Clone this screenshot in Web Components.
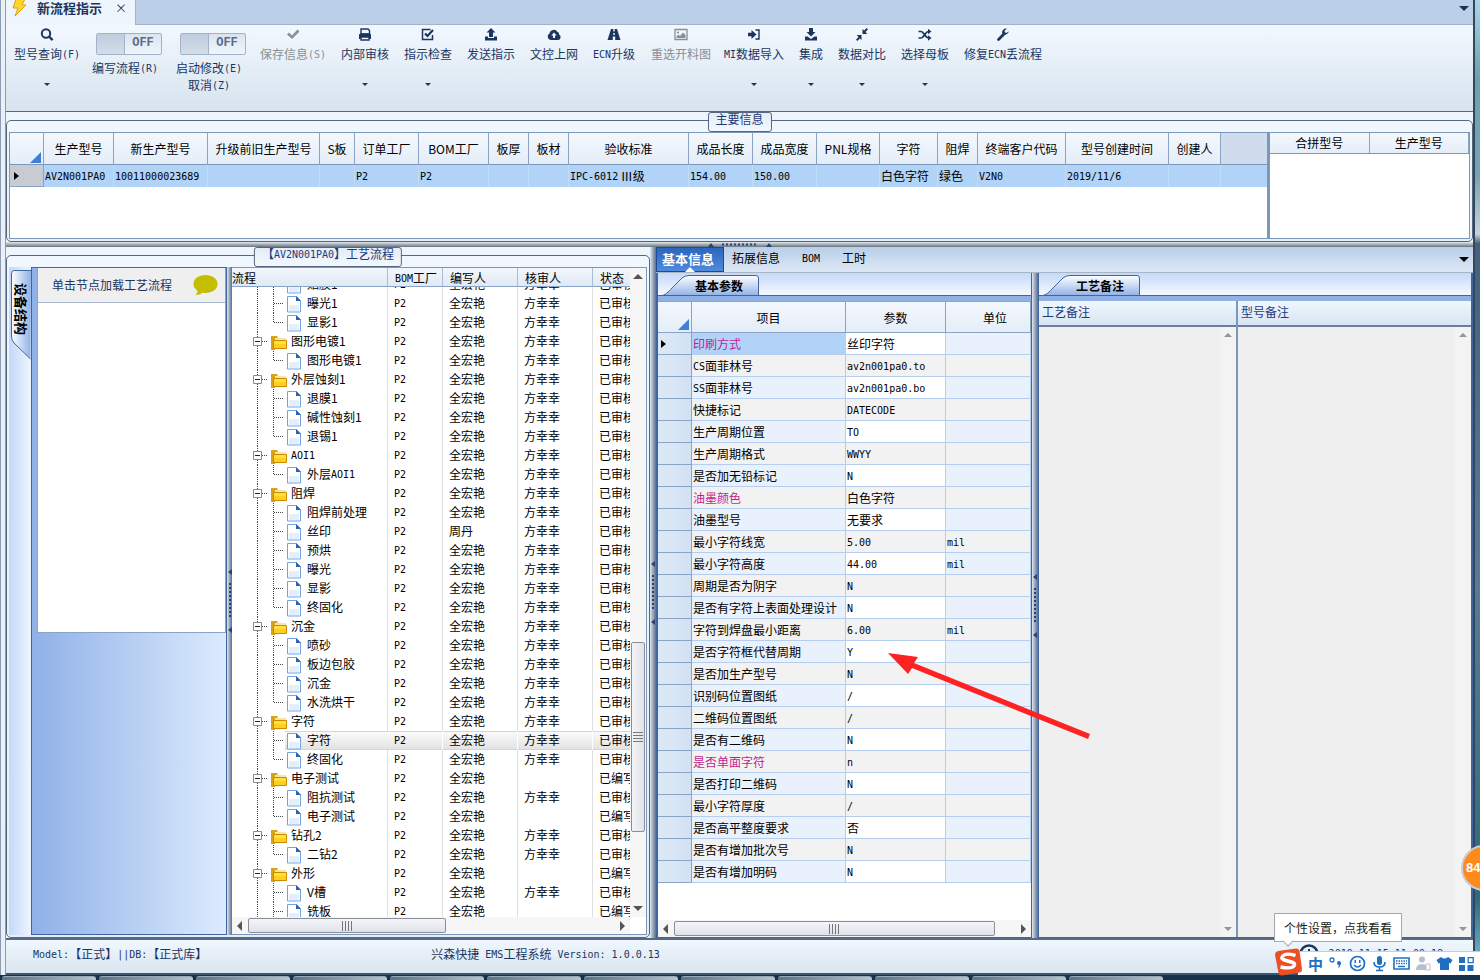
<!DOCTYPE html>
<html lang="zh-CN">
<head>
<meta charset="utf-8">
<title>新流程指示</title>
<style>
  body { margin: 0; font: 12px/18px "Noto Sans CJK SC", sans-serif; color: #000; --navy: #1c3560; --line: #56687f; overflow: hidden; }
</style>
</head>
<body>
<ems-app></ems-app>
<script>
/* Latin runs are set in a half-width face beside the full-width characters. */
const mono = s => s.replace(/ ?[\x21-\x7e]{2,}( +[\x21-\x7e]+)*|^[\x21-\x7e]$/g, m => `<span class="l">${m}</span>`);
const BASE = `*{box-sizing:border-box} .l{font-family:"DejaVu Sans Mono",monospace;font-size:10px;line-height:10px;vertical-align:1px;white-space:pre}
button,input,textarea{font:inherit;color:inherit;margin:0;padding:0;border:0;background:none;border-radius:0}`;
class Base extends HTMLElement {
  connectedCallback() {
    if (this.shadowRoot) return;
    this.attachShadow({ mode: 'open' }).innerHTML = `<style>${BASE}${this.css()}</style>${this.html()}`;
    this.ready && this.ready();
  }
}

/* ---------- ribbon ---------- */
const ICONS = {
  search: '<circle cx="7" cy="6.5" r="4.2" fill="none" stroke="currentColor" stroke-width="2"/><path d="M10 9.5l3.6 3.6" stroke="currentColor" stroke-width="2.4"/>',
  check: '<path d="M2 7.4l2-2 3 3 5.400-5.900 2.100 2L7.100 12z" fill="currentColor"/>',
  print: '<path d="M4 2h7l1.500 1.500V7H4z" fill="#f3f8fe" stroke="currentColor" stroke-width="1.400"/><path d="M2 8q0-1.500 1.500-1.500h9Q14 6.500 14 8v4h-2v-2H4v2H2z" fill="currentColor"/><path d="M4 10h8v3H4z" fill="#f3f8fe" stroke="currentColor" stroke-width="1.300"/>',
  tick: '<path d="M12.500 8v4.500h-10v-10h8" fill="none" stroke="currentColor" stroke-width="1.500"/><path d="M5 6.500l2.500 2.500 5.500-6" fill="none" stroke="currentColor" stroke-width="2.200"/>',
  up: '<path d="M8 1l4.500 4.500H10V10H6V5.500H3.500z" fill="currentColor"/><path d="M2 9.500h3V11h6V9.500h3V13.500H2z" fill="currentColor"/>',
  down: '<path d="M8 9.500L3.500 5H6V1h4v4h2.500z" fill="currentColor"/><path d="M2 9.500h2.500L8 12l3.500-2.500H14v4H2z" fill="currentColor"/>',
  cloud: '<path d="M4.500 13a3.500 3.500 0 0 1-1-6.500A4.300 4.300 0 0 1 11.500 5a2 2 0 0 1 1.500 2.500A2.900 2.900 0 0 1 12 13z" fill="currentColor"/><path d="M8 5.500L5.300 8.500H7V11h2V8.500h1.700z" fill="#f3f8fe"/>',
  road: '<path d="M5 2h2.300v2.500h1.400V2H11l3.500 11H9.200V9.500H6.800V13H1.500z" fill="currentColor"/><path d="M7.300 6h1.400v2H7.300z" fill="#f3f8fe"/>',
  image: '<path d="M2 2.500h12v10H2z" fill="none" stroke="currentColor" stroke-width="1.300"/><circle cx="5" cy="5.500" r="1.100" fill="currentColor"/><path d="M3.500 11V9.500l2-2 1.500 1.500L10 5.500l2.500 2.500v3z" fill="currentColor"/>',
  enter: '<path d="M2 5.700h3.500V3l5 4.500-5 4.500V9.300H2z" fill="currentColor"/><path d="M9.500 3H13v9H9.500" fill="none" stroke="currentColor" stroke-width="1.400"/>',
  shrink: '<path d="M8.500 7.500v-5l1.600 1.600L12.700 1.500 14 2.800l-2.500 2.600 1.700 2.100zM7.500 8.500v5l-1.600-1.600L3.300 14.500 2 13.200l2.500-2.600-1.700-2.100z" fill="currentColor" transform="translate(0 -.5)"/>',
  shuffle: '<path d="M1.500 4.500h2.500c3 0 4 6.500 7.500 6.500M1.500 11h2.500c3 0 4-6.500 7.500-6.500" fill="none" stroke="currentColor" stroke-width="1.700"/><path d="M11 1.800l3.500 2.700L11 7.200zM11 8.300l3.500 2.700L11 13.700z" fill="currentColor"/>',
  wrench: '<path d="M3.500 12.500l5-5" stroke="currentColor" stroke-width="2.800" stroke-linecap="round"/><path d="M13.800 4.300L11.500 6 9.800 5.200 9.600 3.500 12 1.800A3.800 3.800 0 0 0 7.200 6.500 3.800 3.800 0 0 0 13.800 4.300z" fill="currentColor"/>'
};
customElements.define('tool-button', class extends Base {
  css() { return `:host{display:block;flex:none}
    button{display:flex;flex-direction:column;align-items:center;width:100%;height:100%;color:var(--navy);white-space:nowrap}
    button:disabled{color:#8b8f96} svg{display:block;margin-top:2px;height:16px;width:16px} .t{height:18px;margin-top:2px}
    .c{width:0;height:0;border:3px solid transparent;border-top-color:var(--navy);border-bottom:0;margin-top:20px}`; }
  html() { const a = n => this.hasAttribute(n);
    return `<button type="button" ${a('off') ? 'disabled' : ''}><svg viewBox="0 0 16 16">${ICONS[this.getAttribute('icon')]}</svg><span class="t">${mono(this.getAttribute('label'))}</span>${a('menu') ? '<span class="c"></span>' : ''}</button>`; }
});
customElements.define('tool-switch', class extends Base {
  css() { return `:host{display:block;flex:none} label{display:flex;flex-direction:column;align-items:center;color:var(--navy);white-space:nowrap;line-height:17px}
    .s{position:relative;display:flex;width:66px;height:22px;margin:8px 0 4px 8px;border:1px solid #a3b2cb;border-radius:2px;background:linear-gradient(#dbe4ee,#eef5fc)}
    input{appearance:none;width:28px;height:20px;background:linear-gradient(#bfccdd,#d3deea);border-right:1px solid #a3b2cb}
    b{flex:1;text-align:center;font:bold 12px/19px "Liberation Mono",monospace;color:#5b6c86}`; }
  html() { return `<label><span class="s"><input type="checkbox"><b>OFF</b></span>${this.getAttribute('label').split('|').map(s => `<span>${mono(s)}</span>`).join('')}</label>`; }
});

/* ---------- containers ---------- */
customElements.define('group-panel', class extends Base {
  css() { return `:host{display:flex;flex-direction:column;background:#eef5fd;padding-top:8px;min-width:0}
    .b{position:relative;flex:1;display:flex;min-height:0;border:1px solid var(--line);border-radius:5px;padding:11px 2px 2px;background:linear-gradient(#f0f7fe,#e6eff9)}
    h2{position:absolute;top:-9px;left:50%;transform:translateX(-50%);margin:0;font:inherit;line-height:12px;height:20px;padding:0 7px;border:1px solid var(--line);border-radius:3px;color:#1f3a78;background:linear-gradient(#e3ecf8,#f3f8fe);white-space:nowrap;z-index:1}`; }
  html() { return `<div class="b"><h2>${mono(this.getAttribute('caption'))}</h2><slot></slot></div>`; }
});
customElements.define('folder-tab', class extends Base {
  css() { return `:host{display:flex;height:28px;flex:none;border-bottom:5px solid #8fb1e6;background:linear-gradient(#c5d9f8,#f6faff);position:relative}
    button{position:relative;width:100px;height:21px;margin:2px 0 0 2px;padding-left:18px;font-weight:bold;line-height:20px}
    svg{position:absolute;left:0;top:0;width:100px;height:21px} span{position:relative}
    :host::after{content:"";position:absolute;left:0;right:0;bottom:0;height:1px;background:#3f66a3}`; }
  html() { return `<button type="button"><svg viewBox="0 0 100 21"><defs><linearGradient id="g" x2="0" y2="1"><stop stop-color="#fff"/><stop offset="1" stop-color="#8fb1e6"/></linearGradient></defs><path d="M0 21C6 20 8 17 12 13L22 3Q25 .5 29 .5H96Q98.500 .5 98.500 3V21" fill="url(#g)" stroke="#3f66a3"/></svg><span>${this.getAttribute('label')}</span></button>`; }
});
customElements.define('split-bar', class extends Base {
  css() { return `:host{display:flex;align-items:center;justify-content:center;flex:none;overflow:hidden;background:linear-gradient(90deg,#dfe6ee,#8e9cb0 60%,#5d7088)}
    :host([wide]){height:5px;background:linear-gradient(#e4e9ee,#96a2ad 60%,#66727e)} :host(:not([wide])){width:6px} :host([thin]){width:5px!important} svg{display:block;flex:none}`; }
  html() { return this.hasAttribute('wide')
    ? `<svg width="64" height="5"><path d="M0 5l3-4 3 4zM58 5l3-4 3 4z" fill="#27436f"/><path d="M14 2.500h36" stroke="#27436f" stroke-width="2" stroke-dasharray="2 2"/></svg>`
    : `<svg width="6" height="64"><path d="M5 0L1 3l4 3zM5 58l-4 3 4 3z" fill="#27436f"/><path d="M3 14v36" stroke="#27436f" stroke-width="2" stroke-dasharray="2 2"/></svg>`; }
});
/* start / size: percent of the track taken before and by the thumb */
customElements.define('scroll-bar', class extends Base {
  css() { const v = this.hasAttribute('vertical'), st = this.getAttribute('start'), sz = this.getAttribute('size');
    return `:host{display:flex;flex:none;flex-direction:${v ? 'column' : 'row'};align-items:center;background:#f6f6f7;${v ? 'width:16px' : 'height:17px'}}
    i{flex:none;width:0;height:0;border:5px solid transparent;margin:${v ? '6px 0' : '0 5px'}} :host([dim]) i{border-width:4px}
    i:first-of-type{border-${v ? 'bottom' : 'right'}-color:#555;border-${v ? 'top' : 'left'}-width:0!important}
    i:last-of-type{border-${v ? 'top' : 'left'}-color:#555;border-${v ? 'bottom' : 'right'}-width:0!important}
    :host([dim]) i{opacity:.6}
    .k{flex:1;align-self:stretch;display:flex;flex-direction:${v ? 'column' : 'row'};padding:1px}
    .p{flex:0 0 ${st}%} .h{flex:0 0 ${sz}%;display:flex;align-items:center;justify-content:center;border:1px solid #8b8e99;border-radius:2px;background:linear-gradient(${v ? '90deg' : '180deg'},#f4f5f8,#dfe2ea)}
    .h::after{content:"";width:10px;height:10px;background:repeating-linear-gradient(${v ? '180deg' : '90deg'},#777 0 1px,transparent 1px 3px)}`; }
  html() { return `<i></i><div class="k">${this.hasAttribute('size') ? '<div class="p"></div><div class="h"></div>' : ''}</div><i></i>`; }
});

/* ---------- top grids ---------- */
customElements.define('main-grid', class extends Base {
  css() { return `:host{display:block;flex:1;min-width:0;border:1px solid #7d97b8;background:#fff;overflow:hidden}
    table{border-collapse:separate;border-spacing:0;table-layout:fixed;width:100%} th,td{padding:0;white-space:nowrap;overflow:hidden}
    th{height:32px;font-weight:normal;background:linear-gradient(#f4f8fd,#e4edf8);border-right:1px solid #8ba3c4;border-bottom:1px solid #7d97b8}
    th:last-child{background:#cfdcee;border-right:0} td{height:22px;background:#b0d3f7;border-right:1px solid #bfdcf8;padding-left:1px} td:last-child{border-right:0}
    .m{position:relative;background:#c8ccd2;border:0 solid #8ba3c4;border-width:0 1px 1px 0} th:first-child svg{display:block;margin:18px 0 0 20px}
    .m svg{display:block;margin-left:3px}`; }
  html() {
    const cols = [['', 34], ['生产型号', 70, 'AV2N001PA0'], ['新生产型号', 94, '10011000023689'], ['升级前旧生产型号', 112], ['S板', 35], ['订单工厂', 64, 'P2'], ['BOM工厂', 70, 'P2'], ['板厚', 40], ['板材', 40], ['验收标准', 120, 'IPC-6012 Ⅲ级'], ['成品长度', 64, '154.00'], ['成品宽度', 64, '150.00'], ['PNL规格', 63], ['字符', 58, '白色字符'], ['阻焊', 40, '绿色'], ['终端客户代码', 88, 'V2N0'], ['型号创建时间', 103, '2019/11/6'], ['创建人', 52], ['', 0]];
    return `<table><colgroup>${cols.map(c => `<col${c[1] ? ` style="width:${c[1]}px"` : ''}>`).join('')}</colgroup><thead><tr>${cols.map((c, i) => `<th>${i ? c[0] : '<svg width="11" height="11"><path d="M11 0v11H0z" fill="#3f7fd8"/></svg>'}</th>`).join('')}</tr></thead>
    <tbody><tr>${cols.map((c, i) => i ? `<td>${mono(c[2] || '')}</td>` : '<td class="m"><svg width="5" height="8"><path d="M0 0l5 4-5 4z"/></svg></td>').join('')}</tr></tbody></table>`; }
});
customElements.define('merge-grid', class extends Base {
  css() { return `:host{display:block;flex:none;width:202px;border:1px solid #7d97b8;border-left-width:2px;background:#fff}
    table{border-collapse:separate;border-spacing:0;table-layout:fixed;width:100%} th{padding:0;height:21px;font-weight:normal;line-height:20px;background:linear-gradient(#f4f8fd,#e4edf8);border-bottom:1px solid #7d97b8;border-right:1px solid #8ba3c4}`; }
  html() { return `<table><thead><tr><th>合拼型号</th><th>生产型号</th></tr></thead></table>`; }
});

/* ---------- left: structure + process tree ---------- */
customElements.define('structure-panel', class extends Base {
  css() { return `:host{display:flex;flex:none;width:218px;background:linear-gradient(90deg,#c4d8fa,#eef5ff 22px)}
    .v{position:relative;width:22px;flex:none} .v button{position:relative;writing-mode:vertical-rl;text-orientation:sideways;width:20px;height:90px;margin:3px 0 0 2px;padding:13px 0 0;text-align:left;font-weight:bold;font-size:13px;line-height:18px}
    .v svg{position:absolute;left:0;top:0} .v span{position:relative}
    .p{flex:1;border:1px solid #3f66a3;background:linear-gradient(90deg,#8fb1e8,#dceafd)}
    .w{margin-left:5px;height:365px;background:#fff;border:1px solid #8ba3c4;border-width:0 1px 1px}
    header{display:flex;justify-content:space-between;align-items:center;height:35px;padding:0 7px 0 14px;background:#efefef;border-bottom:1px solid #a8b8cf;color:var(--navy)} header svg{display:block}`; }
  html() { return `<div class="v"><button type="button"><svg width="20" height="90"><defs><linearGradient id="g" x2="1" y2="0"><stop stop-color="#fff"/><stop offset="1" stop-color="#8fb1e6"/></linearGradient></defs><path d="M20 .5H3Q.5 .5 .5 4V66Q.5 70 3 73L19.500 89" fill="url(#g)" stroke="#3f66a3"/></svg><span>设备结构</span></button></div>
    <div class="p"><div class="w"><header><span>单击节点加载工艺流程</span><svg width="25" height="22"><path d="M12.500 1C19 1 24.500 4.500 24.500 10S19 19 12.500 19q-1.500 0-3-.3Q7 21 2.500 21q2-2 2-4.300Q.5 14 .5 10C.5 4.500 6 1 12.500 1z" fill="#c3bf00"/></svg></header></div></div>`; }
});
customElements.define('process-tree', class extends Base {
  css() { return `:host{display:flex;flex:1;min-width:0;background:#fff;border:1px solid #7d97b8;border-width:1px 1px 1px 0}
    .a{flex:1;display:flex;flex-direction:column;min-width:0} .s{flex:1;min-height:0;overflow:hidden;position:relative}
    table{border-collapse:separate;border-spacing:0;table-layout:fixed;width:100%} th,td{padding:0 0 0 6px;height:19px;line-height:17px;white-space:nowrap;overflow:hidden;border-right:1px solid #dfdfdf} td{vertical-align:top}
    th{position:sticky;top:0;z-index:2;font-weight:normal;text-align:left;background:linear-gradient(#f3f7fc,#dfe9f6);border-right:1px solid #a9bdd9;border-bottom:1px solid #8ba3c4;padding-left:7px}
    td:first-child,th:first-child{padding:0} th:last-child,td:last-child{border-right:0}
    .n{display:flex;height:19px} .n svg{display:block;flex:none}
    tr.x td{background:linear-gradient(#d5d5d5 1px,#fafafa 1px,#e3e3e3 18px,#d5d5d5 18px) no-repeat;border-right-color:transparent} tr.x td:first-child{background-position:53px 0}
    .z{flex:none;display:flex;flex-direction:column}
    .z scroll-bar{flex:1} .z::after{content:"";height:17px;background:#fff}`; }
  html() {
    /* level (0 group, 1 step, 2 last step), name, editor, flag (n: not reviewed, s: selected) */
    const e = '全宏艳', rows = [[1, '贴膜1'], [1, '曝光1'], [2, '显影1'], [0, '图形电镀1'], [2, '图形电镀1'], [0, '外层蚀刻1'], [1, '退膜1'], [1, '碱性蚀刻1'], [2, '退锡1'], [0, 'AOI1'], [2, '外层AOI1'], [0, '阻焊'], [1, '阻焊前处理'], [1, '丝印', '周丹'], [1, '预烘'], [1, '曝光'], [1, '显影'], [2, '终固化'], [0, '沉金'], [1, '喷砂'], [1, '板边包胶'], [1, '沉金'], [2, '水洗烘干'], [0, '字符'], [1, '字符', e, 's'], [2, '终固化'], [0, '电子测试', e, 'n'], [1, '阻抗测试'], [2, '电子测试', e, 'n'], [0, '钻孔2'], [2, '二钻2'], [0, '外形', e, 'n'], [1, 'V槽'], [1, '铣板', e, 'n']];
    const dot = d => `<path d="${d}" stroke="#444" stroke-dasharray="1 1" fill="none"/>`;
    const folder = '<path d="M39 4h6l1 2h8v3h-9l-2 9h-4z" fill="#d9a21b"/><path d="M43 6h11v2H43z" fill="#f6e6a5"/><path d="M41.500 8.500h13v8h-13z" fill="#ffcf1f" stroke="#c98a00"/><path d="M42 9h12v3H42z" fill="#ffe03c"/>';
    const page = '<path d="M55.500 2.500h9l4 4v11.500h-13z" fill="#fff" stroke="#6fa3e8"/><path d="M57 11h10v6H57z" fill="#e3effd"/><path d="M64 2v5h5z" fill="#2f62b5"/>';
    const icon = l => l === 0
      ? `<svg width="59" height="19">${dot('M25.500 0v19M30 9.500h6')}<path d="M21.500 5.500h8v8h-8z" fill="#fff" stroke="#8a8a8a"/><path d="M23 9.500h5" stroke="#222"/>${folder}</svg>`
      : `<svg width="75" height="19">${dot('M25.500 0v19')}${dot(l === 2 ? 'M41.500 0v10' : 'M41.500 0v19')}${dot('M42 9.500h10')}${page}</svg>`;
    return `<div class="a"><div class="s"><table><colgroup><col><col style="width:55px"><col style="width:75px"><col style="width:75px"><col style="width:37px"></colgroup>
    <thead><tr><th>流程</th><th>${mono('BOM工厂')}</th><th>编写人</th><th>核审人</th><th>状态</th></tr></thead><tbody>${rows.map(([l, n, w = e, f = '']) => `<tr${f === 's' ? ' class="x"' : ''}><td><div class="n">${icon(l)}<span>${mono(n)}</span></div></td><td><span class="l">P2</span></td><td>${w}</td><td>${f === 'n' ? '' : '方幸幸'}</td><td>${f === 'n' ? '已编写' : '已审核'}</td></tr>`).join('')}</tbody></table></div>
    <scroll-bar start="0" size="54"></scroll-bar></div><div class="z"><scroll-bar vertical start="58" size="31"></scroll-bar></div>`; }
  ready() { this.shadowRoot.querySelector('.s').scrollTop = 12; }
});

/* ---------- right: parameters + notes ---------- */
customElements.define('param-panel', class extends Base {
  css() { return `:host{display:flex;flex-direction:column;flex:none;width:376px;background:#fff;border:1px solid #3f66a3;border-width:0 1px 1px 2px;overflow:hidden}
    .s{flex:1;min-height:0;overflow:hidden;border-top:1px solid #8ba3c4} table{border-collapse:separate;border-spacing:0;table-layout:fixed;width:100%}
    th{height:31px;padding:0;line-height:17px;font-weight:normal;background:linear-gradient(#f4f8fd,#e4edf8);border-right:1px solid #8ba3c4;border-bottom:1px solid #8ba3c4}
    td{height:22px;padding:0 0 0 1px;line-height:20px;white-space:nowrap;background:#e8f1fc;border-right:1px solid #b5cdee;border-bottom:1px solid #b5cdee}
    td:nth-child(3){background:#fff} tr:nth-child(even) td:nth-child(n+2){background:#f2f2f2}
    tbody td:first-child{background:linear-gradient(90deg,#dce9f6,#d3e2f3);border-color:#8ba3c4} tr:first-child td:nth-child(2){background:#b0d3f7} .k{color:#c21e93}
    th:last-child{padding-left:14px} th svg{display:block;margin:14px 0 0 20px} td svg{display:block;margin-left:2px}`; }
  html() {
    const rows = [['印刷方式', '丝印字符', 1], ['CS面菲林号', 'av2n001pa0.to'], ['SS面菲林号', 'av2n001pa0.bo'], ['快捷标记', 'DATECODE'], ['生产周期位置', 'TO'], ['生产周期格式', 'WWYY'], ['是否加无铅标记', 'N'], ['油墨颜色', '白色字符', 1], ['油墨型号', '无要求'], ['最小字符线宽', '5.00', 0, 'mil'], ['最小字符高度', '44.00', 0, 'mil'], ['周期是否为阴字', 'N'], ['是否有字符上表面处理设计', 'N'], ['字符到焊盘最小距离', '6.00', 0, 'mil'], ['是否字符框代替周期', 'Y'], ['是否加生产型号', 'N'], ['识别码位置图纸', '/'], ['二维码位置图纸', '/'], ['是否有二维码', 'N'], ['是否单面字符', 'n', 1], ['是否打印二维码', 'N'], ['最小字符厚度', '/'], ['是否高平整度要求', '否'], ['是否有增加批次号', 'N'], ['是否有增加明码', 'N']];
    return `<folder-tab label="基本参数"></folder-tab><div class="s"><table><colgroup><col style="width:34px"><col style="width:154px"><col style="width:100px"><col></colgroup>
    <thead><tr><th><svg width="11" height="11"><path d="M11 0v11H0z" fill="#3f7fd8"/></svg></th><th>项目</th><th>参数</th><th>单位</th></tr></thead>
    <tbody>${rows.map((r, i) => `<tr><td>${i ? '' : '<svg width="5" height="8"><path d="M0 0l5 4-5 4z"/></svg>'}</td><td${r[2] ? ' class="k"' : ''}>${mono(r[0])}</td><td>${mono(r[1])}</td><td>${mono(r[3] || '')}</td></tr>`).join('')}</tbody></table></div><scroll-bar start="0" size="94"></scroll-bar>`; }
});
customElements.define('note-panel', class extends Base {
  css() { return `:host{display:flex;flex-direction:column;flex:1;min-width:0;border:1px solid #3f66a3;border-width:0 2px 1px 1px;background:#efefef}
    .c{flex:1;display:flex;min-height:0} .n{display:flex;flex-direction:column;flex:1;min-width:0} .n:first-child{flex:none;width:199px;border-right:2px solid #7d97b8}
    label{height:26px;line-height:22px;padding-left:3px;color:#1f3a78;background:linear-gradient(#f0f7fe,#d8e5f3);border-bottom:2px solid #6b7f9c} .b{flex:1;display:flex;min-height:0} textarea{flex:1;min-width:0;resize:none;outline:0}
    .b scroll-bar{background:#f3f3f3}`; }
  html() { const n = (id, t) => `<div class="n"><label for="${id}">${t}</label><div class="b"><textarea id="${id}"></textarea><scroll-bar vertical dim></scroll-bar></div></div>`;
    return `<folder-tab label="工艺备注"></folder-tab><div class="c">${n('a', '工艺备注')}${n('b', '型号备注')}</div>`; }
});
customElements.define('info-tabs', class extends Base {
  css() { return `:host{display:flex;align-items:stretch;flex:none;height:26px;background:linear-gradient(#b9cee9,#dde8f5);border-bottom:1px solid #a9b6c8}
    button{position:relative;padding:0 8px 3px;line-height:20px;height:25px} .on{width:68px;padding:0 4px 2px 0;color:#fff;font-weight:bold;font-size:13px;background:linear-gradient(#2a66bd,#4f8ade);border:1px solid #1d4b92}
    .on::after{content:"";position:absolute;left:50%;bottom:-1px;margin-left:-5px;border:5px solid transparent;border-top:0;border-bottom-color:#fff} .c{padding:0 14px 3px}
    .d{margin-left:auto;align-self:center;margin-right:4px;border:5px solid transparent;border-top-color:#000;border-bottom:0;width:0;height:0;padding:0}`; }
  html() { return `<button type="button" class="on">基本信息</button><button type="button">拓展信息</button><button type="button" class="c"><span class="l">BOM</span></button><button type="button">工时</button><button type="button" class="d" aria-label="更多"></button>`; }
});

/* ---------- input-method bar ---------- */
customElements.define('ime-bar', class extends Base {
  css() { return `:host{display:block;position:absolute;right:0;bottom:5px;width:206px;height:24px}
    .b{display:flex;align-items:center;justify-content:space-between;height:24px;margin-left:24px;padding:0 5px 0 10px;background:#fff;border-top:1px solid #c5cfdb;color:#1f6fc4} .b b{font-size:15px;line-height:22px}
    .s{position:absolute;left:0;top:-3px} .t{position:absolute;left:0;top:-38px;padding:5px 9px 4px;border:1px solid #a3a9b3;background:#fff;white-space:nowrap;color:#222;line-height:18px}
    .t::after{content:"";position:absolute;left:9px;bottom:-4px;width:7px;height:7px;background:#fff;border:solid #a3a9b3;border-width:0 1px 1px 0;transform:rotate(45deg)} svg{display:block}`; }
  html() { const i = (p, c = 'currentColor') => `<svg width="17" height="17" fill="${c}">${p}</svg>`;
    return `<div class="t">个性设置，点我看看</div><div class="b"><b>中</b>
    ${i('<circle cx="4" cy="5" r="2" fill="none" stroke="currentColor" stroke-width="1.300"/><path d="M9 8a2 2 0 1 1 3.800 1q-.5 3-3 4 1-1.500 1-2.700Q9 10 9 8z"/>')}
    ${i('<circle cx="8.500" cy="8.500" r="7" fill="none" stroke="currentColor" stroke-width="1.700"/><path d="M5.500 5h1.500v3H5.500zM10 5h1.500v3H10z"/><path d="M5 10q3.500 4 7 0" fill="none" stroke="currentColor" stroke-width="1.300"/>')}
    ${i('<rect x="6" y="1" width="5" height="9" rx="2.500"/><path d="M3 7q0 5 5.500 5T14 7M8.500 12v3.500M5 15.500h7" fill="none" stroke="currentColor" stroke-width="1.600"/>')}
    ${i('<path d="M1 3h15v11H1z" fill="none" stroke="currentColor" stroke-width="1.600"/><path d="M3 6h11M3 8.500h11" stroke="currentColor" stroke-width="1.500" stroke-dasharray="1.500 1"/><path d="M5 11.500h7" stroke="currentColor" stroke-width="1.400"/>')}
    ${i('<circle cx="7" cy="4.500" r="3"/><path d="M1 15q0-6 6-6 3 0 4 1.500V15z"/><path d="M11 9h4v6h-4z" fill="#fff" stroke="#b9bfca"/>', '#b9bfca')}
    ${i('<path d="M5 2q3.500 3 7 0l4.500 3-2 3.500-1.500-.5V15H4V8l-1.500.5L.5 5z"/>')}
    ${i('<path d="M1 2h6v6H1zM1 10h6v6H1zM9.500 10h6v6h-6z"/><path d="M10.200 2.700h5v5h-5z" fill="none" stroke="currentColor" stroke-width="1.300"/>')}
    </div><svg class="s" width="28" height="28"><path d="M4 3L22 .5q3 0 3.500 2.500L28 21q0 3-2.500 3.500L8 27.500q-3 0-3.500-2.500L1 7q0-3 3-4z" fill="#ee4f22"/><path d="M21.500 7.500Q10 4 8 9.500c-1 4 13 3 12.500 7.500Q19 21.500 6.500 19" fill="none" stroke="#fff" stroke-width="3.500"/></svg>`; }
});

/* ---------- window ---------- */
customElements.define('ems-app', class extends Base {
  css() { return `:host{position:relative;display:grid;grid-template-columns:6px minmax(0,1fr) 7px;grid-template-rows:minmax(0,1fr) 5px;height:100vh;overflow:hidden}
    .l0{background:#eaf0f7;border-left:1px solid #8a9bb2;border-right:1px solid #8a9bb2} .r0{border-left:2px solid #33475c;background:linear-gradient(#a9d6e8,#6da0b0 8%,#78a4b1 18%,#c9d2da 24%,#44607a 25%,#5c7a94 60%,#2e6a78 92%,#7fc3dd)}
    .w{display:flex;flex-direction:column;min-width:0}
    .tabs{display:flex;justify-content:space-between;height:25px;flex:none;background:#bccfe8;border-bottom:1px solid #a3b2c6}
    .tabs .d{margin:6px 4px 0 0;width:0;height:0;border:5px solid transparent;border-top-color:#1c2f55;border-bottom:0}
    .tab{display:flex;align-items:center;width:130px;height:25px;padding:0 8px 9px 5px;background:#eef5fd;border-right:1px solid #a3b2c6;color:var(--navy);font-weight:bold;font-size:13px;line-height:16px} .tab svg{flex:none;margin-right:10px} .tab span{flex:1} .tab button{font-size:12px;font-weight:normal;line-height:16px}
    .rib{display:flex;height:87px;flex:none;padding-left:3px;background:linear-gradient(#f2f8fe,#d7e3ef);border-bottom:1px solid var(--line)}
    .top{height:130px;flex:none} .main{flex:1;display:flex;min-height:0} .main>group-panel{flex:none;width:644px}
    .info{flex:1;display:flex;flex-direction:column;min-width:0} .pair{flex:1;display:flex;min-height:0}
    footer{display:flex;align-items:center;position:relative;flex:none;height:37px;padding:0 30px 5px 27px;color:var(--navy);background:linear-gradient(#f0f7fe,#d9e5f1);border-top:2px solid #566a86;border-bottom:2px solid #40576b;white-space:pre}
    footer .v{margin-left:224px} footer .k{margin-left:auto;display:flex;align-items:center;gap:10px}
    .bar{grid-column:1/-1;display:flex;gap:3px;background:#16324a;padding:1px 0 0 2px} .bar i{width:94px;background:linear-gradient(90deg,#5c7182,#b4c4cf);border-top:1px solid #93a9b8;border-radius:3px 3px 0 0}
    .arrow{position:absolute;left:887px;top:651px} .badge{position:absolute;right:-27px;top:845px;width:46px;height:46px;border-radius:50%;background:#ff8a1c;border:2px solid #c9ced6;color:#fff;font:bold 13px/42px "Liberation Sans",sans-serif;padding-left:3px}`; }
  html() {
    const tools = [['search', '型号查询(F)', 76, 'menu'], [0, '编写流程(R)', 80], [0, '启动修改(E)|取消(Z)', 88], ['check', '保存信息(S)', 80, 'off'], ['print', '内部审核', 64, 'menu'], ['tick', '指示检查', 62, 'menu'], ['up', '发送指示', 64], ['cloud', '文控上网', 62], ['road', 'ECN升级', 58], ['image', '重选开料图', 76, 'off'], ['enter', 'MI数据导入', 70, 'menu'], ['down', '集成', 44, 'menu'], ['shrink', '数据对比', 58, 'menu'], ['shuffle', '选择母板', 68, 'menu'], ['wrench', '修复ECN丢流程', 88]];
    return `<div class="l0"></div><div class="w">
    <div class="tabs"><div class="tab"><svg width="16" height="18"><path d="M5 0h9l-3 6h4L4 17l3-8H2z" fill="#ffd52e" stroke="#e0a010"/></svg><span>新流程指示</span><button type="button" aria-label="关闭">×</button></div><span class="d"></span></div>
    <div class="rib">${tools.map(([i, t, w, f = '']) => i ? `<tool-button icon="${i}" label="${t}" ${f} style="width:${w}px"></tool-button>` : `<tool-switch label="${t}" style="width:${w}px"></tool-switch>`).join('')}</div>
    <group-panel class="top" caption="主要信息"><main-grid></main-grid><merge-grid></merge-grid></group-panel>
    <split-bar wide></split-bar>
    <div class="main"><group-panel caption="【AV2N001PA0】工艺流程"><structure-panel></structure-panel><split-bar thin></split-bar><process-tree></process-tree></group-panel><split-bar></split-bar>
      <div class="info"><info-tabs></info-tabs><div class="pair"><param-panel></param-panel><split-bar></split-bar><note-panel></note-panel></div></div></div>
    <footer><span>${mono('Model:')}【正式】${mono('||DB:')}【正式库】</span><span class="v">兴森快捷${mono(' EMS')}工程系统${mono(' Version: 1.0.0.13')}</span><span class="k"><svg width="20" height="20"><circle cx="10" cy="10" r="8.500" fill="none" stroke="#1c3560" stroke-width="2.500"/><path d="M10 5v5h4" fill="none" stroke="#1c3560" stroke-width="2"/></svg><span class="l">2019-11-15 11:09:18</span></span></footer></div>
    <div class="r0"></div><div class="bar">${'<i></i>'.repeat(12)}</div>
    <svg class="arrow" width="206" height="90"><path d="M1 2L31 6l-4 6L203 83l-2 5L25 17l-4 6z" fill="#ff2222"/></svg>
    <div class="badge">84</div><ime-bar></ime-bar>`; }
});
</script>
</body>
</html>
